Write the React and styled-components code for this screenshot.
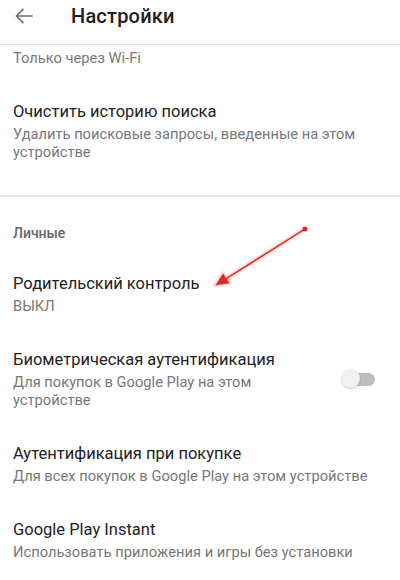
import React from 'react';
import styled, { createGlobalStyle } from 'styled-components';

const GlobalStyle = createGlobalStyle`
    body {
        margin: 0;
        background: #ffffff;
        font-family: Roboto, "Noto Sans", sans-serif;
    }
`;

const Screen = styled.div`
    position: relative;
    width: 400px;
    height: 580px;
    overflow: hidden;
    background: #ffffff;
`;

const Header = styled.header`
    display: flex;
    align-items: center;
    height: 31px;
    padding: 0 0 13px 0;
    border-bottom: 1px solid #e4e4e4;
    box-shadow: 0 1px 2px rgba(0, 0, 0, 0.05);
`;

const BackButton = styled.button`
    display: flex;
    align-items: center;
    justify-content: center;
    width: 30px;
    height: 30px;
    margin-left: 9px;
    padding: 0;
    border: none;
    background: none;
    color: #6b6b6b;
`;

const Title = styled.h1`
    margin: 0 0 0 32px;
    font-size: 20px;
    font-weight: 500;
    color: #202020;
    letter-spacing: 0.2px;
`;

const Item = styled.div`
    display: flex;
    align-items: center;
    padding: ${(p) => (p.$first ? '4px' : '17px')} 16px 17px 13px;
`;

const Texts = styled.div`
    flex: 1;
    min-width: 0;
`;

const ItemTitle = styled.div`
    font-size: 16.5px;
    line-height: 22px;
    color: #222222;
`;

const ItemSub = styled.div`
    margin-top: ${(p) => (p.$only ? '0' : '2px')};
    font-size: 14.7px;
    line-height: 18px;
    color: #787878;
`;

const Divider = styled.hr`
    margin: 17px 0 0 0;
    border: none;
    border-top: 2px solid #ececec;
`;

const SectionLabel = styled.div`
    padding: 27px 13px 14px;
    font-size: 14px;
    line-height: 18px;
    font-weight: 500;
    color: #666666;
`;

const Toggle = styled.div`
    position: relative;
    flex: none;
    width: 34px;
    height: 20px;
    margin-left: 60px;
    margin-right: 9px;
`;

const Track = styled.div`
    position: absolute;
    left: 2px;
    right: 0;
    top: 4px;
    height: 13px;
    border-radius: 7px;
    background: #bdbdbd;
`;

const Thumb = styled.div`
    position: absolute;
    left: 0;
    top: 0;
    width: 19px;
    height: 19px;
    border-radius: 50%;
    background: #f1f1f1;
    box-shadow: 0 1px 2px rgba(0, 0, 0, 0.2);
`;

const Annotation = styled.svg`
    position: absolute;
    left: 0;
    top: 0;
    pointer-events: none;
`;

const BackIcon = () => (
    <svg width="26" height="26" viewBox="0 0 24 24" fill="currentColor">
        <path d="M20 11.3H6.6l5.4-5.4-1-1L4 12l7 7.1 1-1-5.4-5.4H20z" />
    </svg>
);

const App = () => {
    return (
        <Screen>
            <GlobalStyle />
            <Header>
                <BackButton>
                    <BackIcon />
                </BackButton>
                <Title>Настройки</Title>
            </Header>

            <Item $first>
                <Texts>
                    <ItemSub $only>Только через Wi-Fi</ItemSub>
                </Texts>
            </Item>

            <Item>
                <Texts>
                    <ItemTitle>Очистить историю поиска</ItemTitle>
                    <ItemSub>Удалить поисковые запросы, введенные на этом устройстве</ItemSub>
                </Texts>
            </Item>

            <Divider />

            <SectionLabel>Личные</SectionLabel>

            <Item>
                <Texts>
                    <ItemTitle>Родительский контроль</ItemTitle>
                    <ItemSub>ВЫКЛ</ItemSub>
                </Texts>
            </Item>

            <Item>
                <Texts>
                    <ItemTitle>Биометрическая аутентификация</ItemTitle>
                    <ItemSub>Для покупок в Google Play на этом устройстве</ItemSub>
                </Texts>
                <Toggle>
                    <Track />
                    <Thumb />
                </Toggle>
            </Item>

            <Item>
                <Texts>
                    <ItemTitle>Аутентификация при покупке</ItemTitle>
                    <ItemSub>Для всех покупок в Google Play на этом устройстве</ItemSub>
                </Texts>
            </Item>

            <Item>
                <Texts>
                    <ItemTitle>Google Play Instant</ItemTitle>
                    <ItemSub>Использовать приложения и игры без установки</ItemSub>
                </Texts>
            </Item>

            <Annotation width="400" height="580">
                <defs>
                    <filter id="glow" x="-20%" y="-20%" width="140%" height="140%">
                        <feGaussianBlur stdDeviation="1.2" />
                    </filter>
                </defs>
                <g stroke="#f08080" strokeWidth="3" fill="#f08080" filter="url(#glow)" opacity="0.6">
                    <line x1="305" y1="229" x2="224" y2="280" />
                    <polygon points="216,285 223,274 229,283" />
                </g>
                <g stroke="#d42a2a" strokeWidth="1.4" fill="#d42a2a">
                    <line x1="305" y1="229" x2="224" y2="280" />
                    <polygon points="216,285 223,274 229,283" strokeWidth="0.5" />
                    <circle cx="305" cy="229" r="2.5" stroke="none" />
                </g>
            </Annotation>
        </Screen>
    );
};

export default App;
